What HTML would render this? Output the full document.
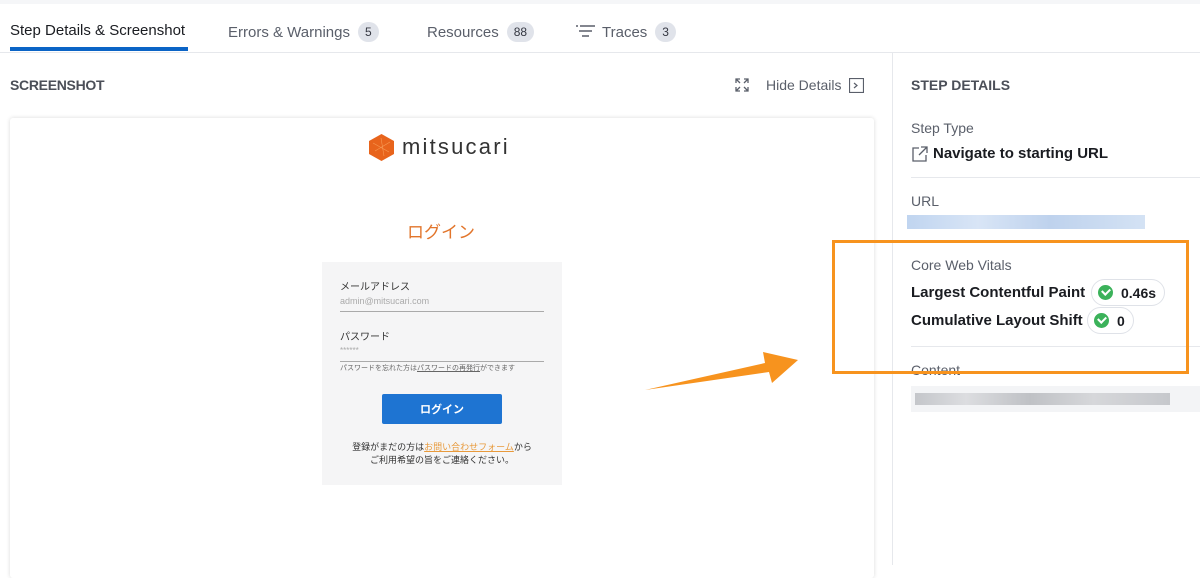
<!DOCTYPE html>
<html><head><meta charset="utf-8"><style>
*{margin:0;padding:0;box-sizing:border-box}
body{width:1200px;height:565px;overflow:hidden;background:#fff;font-family:"Liberation Sans","Noto Sans CJK JP",sans-serif;color:#343741;position:relative}
.a{position:absolute}
.tab{position:absolute;top:22px;font-size:15px;color:#5a5f6a}
.badge{display:inline-block;background:#e0e3ea;border-radius:11px;font-size:12px;padding:3px 7px;margin-left:8px;color:#343741;vertical-align:1px}
.jp{font-family:"Noto Sans CJK JP",sans-serif}
.pill{position:absolute;display:flex;align-items:center;border:1px solid #dfe2e8;border-radius:14px;height:27px;padding:0 8px 0 6px;font-weight:bold;font-size:14px;color:#1a1c21}
.chk{width:15px;height:15px;border-radius:50%;background:#3bb25a;margin-right:8px;position:relative}
.chk:after{content:"";position:absolute;left:4px;top:3px;width:6px;height:4px;border-left:2px solid #fff;border-bottom:2px solid #fff;transform:rotate(-45deg)}
.lbl{position:absolute;font-size:15px;font-weight:bold;color:#1a1c21}
</style></head><body>
<div class="a" style="left:0;top:0;width:1200px;height:4px;background:#f5f6f8"></div>
<div class="tab" style="left:10px;color:#1a1c21">Step Details &amp; Screenshot</div>
<div class="a" style="left:10px;top:47px;width:178px;height:4px;background:#0b64c6"></div>
<div class="tab" style="left:228px">Errors &amp; Warnings<span class="badge">5</span></div>
<div class="tab" style="left:427px">Resources<span class="badge">88</span></div>
<div class="tab" style="left:576px"><svg width="20" height="14" style="vertical-align:-1px;margin-right:6px" stroke="#5a5f6a" stroke-width="1.5"><path d="M0 2H2M4 2H19M3 7H16M6 12H13"/></svg>Traces<span class="badge">3</span></div>
<div class="a" style="left:0;top:52px;width:1200px;height:1px;background:#e6e8ec"></div>
<div class="a" style="left:10px;top:77px;font-size:14px;font-weight:bold;color:#4b4f58;letter-spacing:-0.3px">SCREENSHOT</div>
<svg class="a" style="left:735px;top:78px" width="14" height="14" stroke="#5a5f6a" stroke-width="1.3" fill="none"><path d="M1 5V1H5M9 1H13V5M13 9V13H9M5 13H1V9M1 1L5 5M13 1L9 5M13 13L9 9M1 13L5 9"/></svg>
<div class="a" style="left:766px;top:77px;font-size:14px;color:#5a5f6a">Hide Details</div>
<svg class="a" style="left:849px;top:78px" width="15" height="15" stroke="#5a5f6a" stroke-width="1.2" fill="none"><rect x="0.5" y="0.5" width="14" height="14"/><path d="M5 5L8 7.5L5 10"/></svg>
<div class="a" style="left:10px;top:118px;width:864px;height:460px;background:#fff;box-shadow:0 0 4px rgba(0,0,0,.15);border-radius:3px"></div>
<svg class="a" style="left:369px;top:134px" width="25" height="27"><polygon points="12.5,0 25,7 25,20 12.5,27 0,20 0,7" fill="#e8641c"/><path d="M4 9L20 18M12 4L15 22M6 17L21 8" stroke="#f79a55" stroke-width=".6"/></svg>
<div class="a" style="left:402px;top:134px;font-size:22px;letter-spacing:2.2px;color:#333">mitsucari</div>
<div class="a jp" style="left:407px;top:218px;font-size:17px;color:#e2752b">ログイン</div>
<div class="a" style="left:322px;top:262px;width:240px;height:223px;background:#f5f5f6"></div>
<div class="a jp" style="left:340px;top:278px;font-size:10px;color:#333">メールアドレス</div>
<div class="a" style="left:340px;top:296px;font-size:9px;color:#aaa">admin@mitsucari.com</div>
<div class="a" style="left:340px;top:311px;width:204px;height:1px;background:#aaa"></div>
<div class="a jp" style="left:340px;top:328px;font-size:10px;color:#333">パスワード</div>
<div class="a" style="left:340px;top:346px;font-size:8px;color:#aaa">******</div>
<div class="a" style="left:340px;top:361px;width:204px;height:1px;background:#aaa"></div>
<div class="a jp" style="left:340px;top:363px;font-size:7px;color:#666">パスワードを忘れた方は<u>パスワードの再発行</u>ができます</div>
<div class="a jp" style="left:382px;top:394px;width:120px;height:30px;background:#1e74d2;border-radius:2px;color:#fff;font-size:11px;font-weight:bold;text-align:center;line-height:30px">ログイン</div>
<div class="a jp" style="left:322px;top:440px;width:240px;text-align:center;font-size:9px;line-height:13px;color:#333">登録がまだの方は<u style="color:#e89a3c">お問い合わせフォーム</u>から<br>ご利用希望の旨をご連絡ください。</div>
<div class="a" style="left:892px;top:53px;width:1px;height:512px;background:#e6e8ec"></div>
<div class="a" style="left:911px;top:77px;font-size:14px;font-weight:bold;color:#4b4f58">STEP DETAILS</div>
<div class="a" style="left:911px;top:120px;font-size:14px;color:#5a5f6a">Step Type</div>
<svg class="a" style="left:912px;top:146px" width="16" height="16" stroke="#5a5f6a" stroke-width="1.3" fill="none"><path d="M7 2H1V15H14V9M9 1H15V7M15 1L7 9"/></svg>
<div class="a" style="left:933px;top:145px;font-size:15px;font-weight:bold;color:#1a1c21">Navigate to starting URL</div>
<div class="a" style="left:911px;top:177px;width:289px;height:1px;background:#e6e8ec"></div>
<div class="a" style="left:911px;top:193px;font-size:14px;color:#5a5f6a">URL</div>
<div class="a" style="left:907px;top:215px;width:238px;height:14px;background:linear-gradient(90deg,#b9d0ee,#d4e2f5 30%,#b7cdeb 60%,#cfdff3);opacity:.9"></div>
<div class="a" style="left:911px;top:257px;font-size:14px;color:#5a5f6a">Core Web Vitals</div>
<div class="lbl" style="left:911px;top:284px">Largest Contentful Paint</div>
<div class="pill" style="left:1091px;top:279px"><span class="chk"></span>0.46s</div>
<div class="lbl" style="left:911px;top:312px">Cumulative Layout Shift</div>
<div class="pill" style="left:1087px;top:307px"><span class="chk"></span>0</div>
<div class="a" style="left:911px;top:346px;width:289px;height:1px;background:#e6e8ec"></div>
<div class="a" style="left:911px;top:362px;font-size:14px;color:#5a5f6a">Content</div>
<div class="a" style="left:911px;top:386px;width:289px;height:26px;background:#f3f4f6"></div>
<div class="a" style="left:915px;top:393px;width:255px;height:12px;background:linear-gradient(90deg,#c4c6ca,#dcdde0 20%,#bfc1c5 45%,#d6d7da 70%,#c6c8cc)"></div>
<div class="a" style="left:832px;top:240px;width:357px;height:134px;border:3px solid #f7931e"></div>
<svg class="a" style="left:640px;top:345px" width="165" height="50"><path d="M5 45L125 18L123 7L158 15L132 38L129 27Z" fill="#f7931e"/></svg>
</body></html>
